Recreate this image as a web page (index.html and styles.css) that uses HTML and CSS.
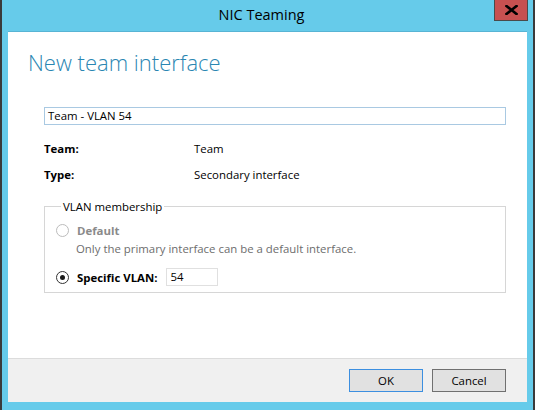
FILE: index.html
```html
<!DOCTYPE html>
<html>
<head>
<meta charset="utf-8">
<link rel="stylesheet" href="styles.css">
</head>
<body>
<div class="window">
  <div class="titlebar">
    <span class="title">NIC Teaming</span>
    <div class="close">
      <svg width="13" height="10" viewBox="0 0 13 10"><path d="M1.5 1 L11.5 9 M11.5 1 L1.5 9" stroke="#000" stroke-width="2.6" stroke-linecap="square"/></svg>
    </div>
  </div>
  <div class="client">
    <div class="content">
      <h1 class="heading">New team interface</h1>
      <div class="namebox">Team - VLAN 54</div>
      <div class="props">
        <div class="prop"><span class="plabel">Team:</span><span class="pvalue">Team</span></div>
        <div class="prop"><span class="plabel">Type:</span><span class="pvalue">Secondary interface</span></div>
      </div>
      <fieldset class="group">
        <legend class="legend">VLAN membership</legend>
        <div class="option disabled">
          <span class="radio"></span>
          <span class="olabel">Default</span>
        </div>
        <div class="desc">Only the primary interface can be a default interface.</div>
        <div class="option">
          <span class="radio checked"><span class="dot"></span></span>
          <span class="olabel">Specific VLAN:</span>
          <span class="vlanbox">54</span>
        </div>
      </fieldset>
    </div>
    <div class="footer">
      <div class="btn default">OK</div>
      <div class="btn">Cancel</div>
    </div>
  </div>
</div>
</body>
</html>
```
FILE: styles.css
```css
html, body {
  margin: 0;
  padding: 0;
}
body {
  font-family: "Open Sans", "Noto Sans", sans-serif;
  font-size: 11.4px;
  color: #000;
}
.window {
  width: 535px;
  height: 410px;
  box-sizing: border-box;
  background: #66cbea;
  border-left: 2px solid #3a3a3a;
  border-right: 2px solid #3a3a3a;
  padding: 0 6px 8px 6px;
  display: flex;
  flex-direction: column;
  position: relative;
}
.titlebar {
  height: 31px;
  display: flex;
  align-items: center;
  justify-content: center;
  flex: none;
}
.title {
  font-size: 14.5px;
  color: #000;
  margin-top: -2px;
  margin-left: -12px;
}
.close {
  position: absolute;
  top: 0;
  right: 5px;
  width: 32px;
  height: 20px;
  background: #c75050;
  border: 1px solid #4a4a4a;
  border-top: none;
  display: flex;
  align-items: center;
  justify-content: center;
}
.client {
  flex: 1;
  background: #fff;
  border-top: 1px solid #58b4d4;
  display: flex;
  flex-direction: column;
}
.content {
  flex: 1;
  padding: 14px 21px 0 36px;
}
.heading {
  margin: 0 0 0 -16px;
  font-size: 22px;
  font-weight: 300;
  color: #2a86b2;
  line-height: 32px;
  height: 32px;
}
.namebox {
  margin-top: 29px;
  height: 16px;
  border: 1px solid #a9c9e2;
  padding: 0 3px;
  line-height: 16px;
}
.props {
  margin-top: 10px;
}
.prop {
  display: flex;
  height: 26px;
  align-items: center;
}
.plabel {
  width: 150px;
  font-weight: bold;
}
.group {
  margin: 12px 0 0 0;
  border: 1px solid #d6d6d6;
  padding: 7px 0 6px 11px;
}
.legend {
  padding: 0 2px;
  margin-left: 5px;
}
.option {
  display: flex;
  align-items: center;
  height: 18px;
}
.radio {
  width: 11px;
  height: 11px;
  border: 1px solid #333;
  border-radius: 50%;
  box-sizing: content-box;
  display: flex;
  align-items: center;
  justify-content: center;
  margin-right: 8px;
  background: #fff;
}
.disabled .radio {
  border-color: #bcbcbc;
}
.dot {
  width: 5px;
  height: 5px;
  border-radius: 50%;
  background: #1a1a1a;
}
.olabel {
  font-weight: bold;
}
.disabled .olabel {
  color: #8a8a8a;
}
.desc {
  margin-left: 20px;
  margin-top: 1px;
  height: 17px;
  line-height: 17px;
  color: #6d6d6d;
}
.option + .desc + .option {
  margin-top: 11px;
}
.vlanbox {
  margin-left: 9px;
  width: 44px;
  height: 16px;
  border: 1px solid #e0e0e0;
  padding: 0 3px;
  line-height: 16px;
  font-weight: normal;
}
.footer {
  flex: none;
  background: #f0f0f0;
  border-top: 1px solid #dcdcdc;
  display: flex;
  justify-content: flex-end;
  align-items: flex-start;
  padding: 10px 21px 0 0;
  gap: 9px;
  box-sizing: border-box;
  height: 44px;
}
.btn {
  width: 72px;
  height: 21px;
  border: 1px solid #707070;
  background: #e1e1e1;
  display: flex;
  align-items: center;
  justify-content: center;
}
.btn.default {
  border-color: #3c8fe0;
}
```
